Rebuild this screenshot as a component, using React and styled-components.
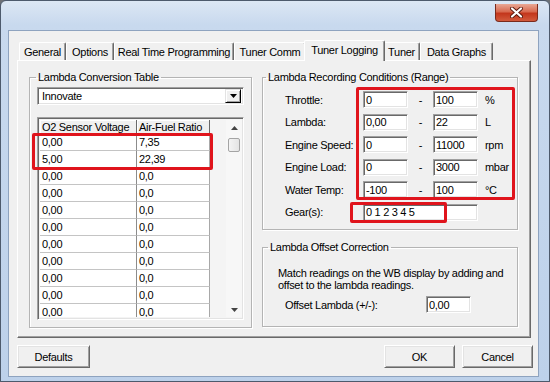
import React from 'react'
import styled, { createGlobalStyle } from 'styled-components'

const GlobalStyle = createGlobalStyle`
  html, body {
    margin: 0;
    padding: 0;
    background: #6e7176;
  }
  body {
    font-family: "Liberation Sans", Arial, sans-serif;
    font-size: 11px;
    letter-spacing: -0.3px;
    color: #000;
  }
`

const Window = styled.div`
  width: 550px;
  height: 382px;
  box-sizing: border-box;
  display: flex;
  flex-direction: column;
  border: 1px solid #4d5a6c;
  border-radius: 6px 6px 0 0;
  background: linear-gradient(180deg, #dce7f4 0, #c8d9ee 24px, #bdd1ea 100%);
  overflow: hidden;
`

const TitleBar = styled.div`
  height: 29px;
  flex: none;
  display: flex;
  justify-content: flex-end;
  align-items: flex-start;
  padding: 3px 11px 0 0;
  box-sizing: border-box;
`

const CloseButton = styled.div`
  width: 43px;
  height: 18px;
  box-sizing: border-box;
  border: 1px solid #7a2a1c;
  border-top: none;
  border-radius: 0 0 4px 4px;
  background: linear-gradient(180deg, #e9a895 0, #d86a50 45%, #c3361c 55%, #d25a3c 100%);
  display: flex;
  align-items: center;
  justify-content: center;
`

const Body = styled.div`
  flex: 1;
  margin: 0 10px 4px 7px;
  border: 1px solid #8ea3bf;
  background: #f0f0f0;
  padding: 9px 5px 0 8px;
  display: flex;
  flex-direction: column;
`

const TabStrip = styled.div`
  height: 20px;
  display: flex;
  align-items: flex-end;
  padding-left: 2px;
  position: relative;
  z-index: 2;
`

const Tab = styled.div`
  width: ${p => p.$w}px;
  height: ${p => (p.$active ? 21 : 18)}px;
  margin: 0 ${p => (p.$active ? -2 : 0)}px ${p => (p.$active ? -1 : 0)}px;
  box-sizing: border-box;
  background: #f0f0f0;
  border-top: 1px solid #fff;
  border-left: 1px solid #fff;
  border-right: 1px solid #696969;
  box-shadow: inset -1px 0 0 #a0a0a0;
  border-radius: 2px 2px 0 0;
  display: flex;
  align-items: ${p => (p.$active ? 'flex-start' : 'center')};
  padding-top: ${p => (p.$active ? 3 : 0)}px;
  justify-content: center;
  white-space: nowrap;
  position: relative;
  z-index: ${p => (p.$active ? 2 : 1)};
`

const Panel = styled.div`
  width: 514px;
  height: 278px;
  box-sizing: border-box;
  border-top: 1px solid #fff;
  border-left: 1px solid #fff;
  border-right: 1px solid #696969;
  border-bottom: 1px solid #696969;
  box-shadow: inset -1px -1px 0 #a0a0a0;
  padding: 10px 0 0 11px;
  display: flex;
  gap: 10px;
  position: relative;
`

const Group = styled.fieldset`
  margin: 0;
  width: ${p => p.$w}px;
  height: ${p => p.$h}px;
  box-sizing: border-box;
  min-width: 0;
  padding: 0 7px 0 ${p => p.$pl ?? 7}px;
  border: 1px solid #b4b4b4;
  box-shadow: inset 1px 1px 0 #fff, 1px 1px 0 #fff;
`

const Legend = styled.legend`
  padding: 0 2px;
  margin-left: ${p => p.$ml ?? 4}px;
  line-height: 13px;
`

const Column = styled.div`
  display: flex;
  flex-direction: column;
  gap: 11px;
`

const Select = styled.div`
  margin-top: 3px;
  height: 18px;
  box-sizing: border-box;
  border: 1px solid;
  border-color: #a0a0a0 #fff #fff #a0a0a0;
  box-shadow: inset 1px 1px 0 #696969, inset -1px -1px 0 #e3e3e3;
  background: #fff;
  display: flex;
  align-items: center;
  padding: 0 2px 0 4px;
`

const SelectText = styled.span`
  flex: 1;
`

const ArrowButton = styled.div`
  width: 16px;
  height: 14px;
  box-sizing: border-box;
  background: #f0f0f0;
  border: 1px solid;
  border-color: #e3e3e3 #000 #000 #e3e3e3;
  box-shadow: inset 1px 1px 0 #fff, inset -1px -1px 0 #a0a0a0;
  display: flex;
  align-items: center;
  justify-content: center;
`

const GridBox = styled.div`
  margin-top: 12px;
  height: 203px;
  box-sizing: border-box;
  border: 1px solid;
  border-color: #a0a0a0 #fff #fff #a0a0a0;
  box-shadow: inset 1px 1px 0 #696969, inset -1px -1px 0 #e3e3e3;
  padding: 2px 1px 2px 2px;
  background: #f4f4f4;
  display: flex;
`

const Table = styled.div`
  flex: 1;
  overflow: hidden;
  display: grid;
  grid-template-columns: 97px 73px;
  grid-auto-rows: 17px;
  grid-template-rows: 14px;
  align-content: start;
`

const HeadCell = styled.div`
  background: #f0f0f0;
  border-right: 1px solid #696969;
  box-shadow: inset 1px 1px 0 #fff, inset 0 -1px 0 #a0a0a0;
  padding-left: 2px;
  line-height: 14px;
  white-space: nowrap;
  overflow: hidden;
`

const Cell = styled.div`
  background: #fff;
  border-right: 1px solid ${p => (p.$first ? '#8c8c8c' : '#a8a8a8')};
  border-bottom: 1px solid #c4c4c4;
  padding-left: 2px;
  line-height: 16px;
`

const ScrollBar = styled.div`
  width: 16px;
  background: #f7f7f7;
  display: flex;
  flex-direction: column;
  align-items: center;
`

const ScrollArrow = styled.div`
  height: 15px;
  width: 16px;
  display: flex;
  align-items: center;
  justify-content: center;
`

const Thumb = styled.div`
  width: 12px;
  height: 14px;
  box-sizing: border-box;
  border: 1px solid #a4a4a4;
  border-radius: 2px;
  background: linear-gradient(90deg, #f4f4f4, #e4e4e4);
  margin-top: 3px;
`

const Spacer = styled.div`
  flex: 1;
`

const FieldGrid = styled.div`
  margin-top: 7px;
  display: grid;
  grid-template-columns: 78px 45px 25px 45px auto;
  grid-auto-rows: 17px;
  row-gap: 5.5px;
  align-items: center;
`

const Label = styled.span`
  white-space: nowrap;
`

const Dash = styled.span`
  text-align: center;
`

const Unit = styled.span`
  padding-left: 7px;
`

const Field = styled.input`
  width: ${p => p.$w || 45}px;
  height: 17px;
  box-sizing: border-box;
  margin: 0;
  border: 1px solid;
  border-color: #a0a0a0 #fff #fff #a0a0a0;
  box-shadow: inset 1px 1px 0 #696969, inset -1px -1px 0 #e3e3e3;
  background: #fff;
  font: inherit;
  letter-spacing: inherit;
  color: #000;
  padding: 0 2px;
  outline: none;
  grid-column: ${p => p.$span || 'auto'};
`

const Note = styled.div`
  margin-top: 13px;
  line-height: 12px;
  white-space: nowrap;
`

const OffsetRow = styled.div`
  margin-top: 5px;
  display: flex;
  align-items: center;
`

const OffsetLabel = styled.span`
  width: 148px;
  padding-left: 7px;
  box-sizing: border-box;
`

const Highlight = styled.div`
  position: absolute;
  left: ${p => p.$x}px;
  top: ${p => p.$y}px;
  width: ${p => p.$w}px;
  height: ${p => p.$h}px;
  box-sizing: border-box;
  border: 3px solid #e0141c;
  border-radius: 2px;
  pointer-events: none;
`

const ButtonRow = styled.div`
  margin-top: 7px;
  display: flex;
  justify-content: space-between;
`

const ButtonGroup = styled.div`
  display: flex;
  gap: 7px;
`

const Button = styled.button`
  width: ${p => p.$w}px;
  height: 23px;
  margin: 0;
  box-sizing: border-box;
  background: #f0f0f0;
  border: 1px solid;
  border-color: #fff #696969 #696969 #fff;
  box-shadow: inset 1px 1px 0 #e3e3e3, inset -1px -1px 0 #a0a0a0;
  font: inherit;
  letter-spacing: inherit;
  color: #000;
  padding: 0;
`

const tabs = [
  ['General', 47],
  ['Options', 48],
  ['Real Time Programming', 120],
  ['Tuner Comm', 72],
  ['Tuner Logging', 81, true],
  ['Tuner', 37],
  ['Data Graphs', 73],
]

const conditions = [
  ['Throttle:', '0', '100', '%'],
  ['Lambda:', '0,00', '22', 'L'],
  ['Engine Speed:', '0', '11000', 'rpm'],
  ['Engine Load:', '0', '3000', 'mbar'],
  ['Water Temp:', '-100', '100', '°C'],
]

const rows = [
  ['0,00', '7,35'],
  ['5,00', '22,39'],
  ...Array.from({ length: 9 }, () => ['0,00', '0,0']),
]

export default function App() {
  return (
    <>
      <GlobalStyle />
      <Window>
        <TitleBar>
          <CloseButton>
            <svg width="13" height="11" viewBox="0 0 13 11">
              <path d="M2 1.5 L11 9.5 M11 1.5 L2 9.5" stroke="#5a1a0e" strokeWidth="4" strokeLinecap="round" />
              <path d="M2 1.5 L11 9.5 M11 1.5 L2 9.5" stroke="#fff" strokeWidth="2.2" strokeLinecap="round" />
            </svg>
          </CloseButton>
        </TitleBar>
        <Body>
          <TabStrip>
            {tabs.map(([name, w, active]) => (
              <Tab key={name} $w={w} $active={active}>
                {name}
              </Tab>
            ))}
          </TabStrip>
          <Panel>
            <Group $w={223} $h={257}>
              <Legend $ml={-1}>Lambda Conversion Table</Legend>
              <Select>
                <SelectText>Innovate</SelectText>
                <ArrowButton>
                  <svg width="7" height="4" viewBox="0 0 7 4">
                    <path d="M0 0 H7 L3.5 4 Z" fill="#000" />
                  </svg>
                </ArrowButton>
              </Select>
              <GridBox>
                <Table>
                  <HeadCell>O2 Sensor Voltage</HeadCell>
                  <HeadCell>Air-Fuel Ratio</HeadCell>
                  {rows.map(([v, r], i) => (
                    <React.Fragment key={i}>
                      <Cell $first>{v}</Cell>
                      <Cell>{r}</Cell>
                    </React.Fragment>
                  ))}
                </Table>
                <ScrollBar>
                  <ScrollArrow>
                    <svg width="7" height="4" viewBox="0 0 7 4">
                      <path d="M0 4 H7 L3.5 0 Z" fill="#444" />
                    </svg>
                  </ScrollArrow>
                  <Thumb />
                  <Spacer />
                  <ScrollArrow>
                    <svg width="7" height="4" viewBox="0 0 7 4">
                      <path d="M0 0 H7 L3.5 4 Z" fill="#444" />
                    </svg>
                  </ScrollArrow>
                </ScrollBar>
              </GridBox>
            </Group>
            <Column>
              <Group $w={256} $h={159} $pl={22}>
                <Legend $ml={-19}>Lambda Recording Conditions (Range)</Legend>
                <FieldGrid>
                  {conditions.map(([label, from, to, unit]) => (
                    <React.Fragment key={label}>
                      <Label>{label}</Label>
                      <Field readOnly value={from} />
                      <Dash>-</Dash>
                      <Field readOnly value={to} />
                      <Unit>{unit}</Unit>
                    </React.Fragment>
                  ))}
                  <Label>Gear(s):</Label>
                  <Field readOnly value="0 1 2 3 4 5" $w={115} $span="2 / 5" />
                </FieldGrid>
              </Group>
              <Group $w={256} $h={86} $pl={15}>
                <Legend $ml={-10}>Lambda Offset Correction</Legend>
                <Note>
                  Match readings on the WB display by adding and
                  <br />
                  offset to the lambda readings.
                </Note>
                <OffsetRow>
                  <OffsetLabel>Offset Lambda (+/-):</OffsetLabel>
                  <Field readOnly value="0,00" />
                </OffsetRow>
              </Group>
            </Column>
            <Highlight $x={14} $y={72} $w={181} $h={37} />
            <Highlight $x={338} $y={26} $w={159} $h={113} />
            <Highlight $x={332} $y={141} $w={97} $h={21} />
          </Panel>
          <ButtonRow>
            <Button $w={73}>Defaults</Button>
            <ButtonGroup>
              <Button $w={71}>OK</Button>
              <Button $w={71}>Cancel</Button>
            </ButtonGroup>
          </ButtonRow>
        </Body>
      </Window>
    </>
  )
}
